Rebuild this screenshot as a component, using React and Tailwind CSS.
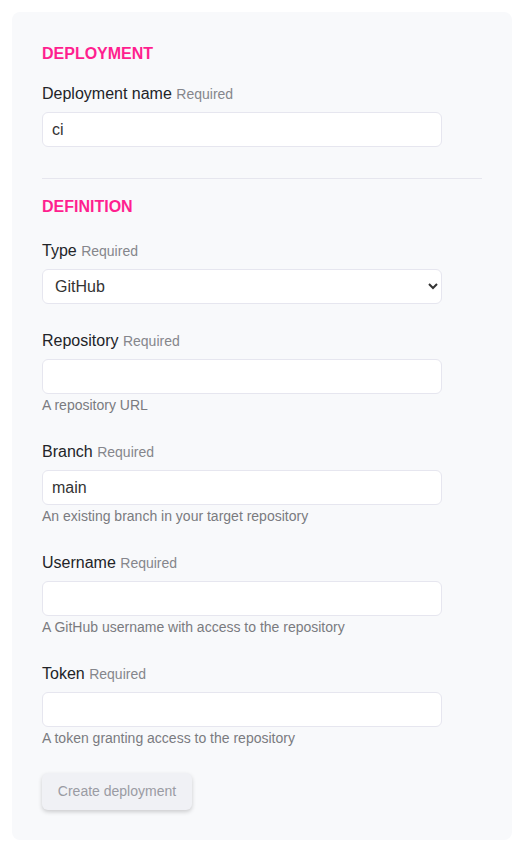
import React from "react";

const FONT = { fontFamily: '"Liberation Sans", Arial, sans-serif' };

function Label({ children }) {
  return (
    <div className="pt-[1px] text-[16px] leading-[24px] text-[#222428]">
      {children} <span className="text-[14px] text-[#85868c]">Required</span>
    </div>
  );
}

function Input({ value = "" }) {
  return (
    <input
      readOnly
      value={value}
      className="block w-[400px] h-[35px] mt-[6px] rounded-[6px] border border-[#e6e6ef] bg-white px-[9px] text-[16px] text-[#333] outline-none"
      style={FONT}
    />
  );
}

function Help({ children }) {
  return <div className="text-[14px] leading-[22px] text-[#7a7b80]">{children}</div>;
}

function Field({ label, value, help, gap = "mt-[23px]" }) {
  return (
    <div className={gap}>
      <Label>{label}</Label>
      <Input value={value} />
      <Help>{help}</Help>
    </div>
  );
}

export default function App() {
  return (
    <div className="bg-white p-[12px] w-[521px] min-h-[856px]" style={FONT}>
      <div className="w-[500px] bg-[#f8f9fb] rounded-[8px] px-[30px] pt-[31px] pb-[30px]">
        <h2 className="text-[16px] leading-[22px] font-bold text-[#ff1f8f]">DEPLOYMENT</h2>
        <div className="mt-[16px]">
          <Label>Deployment name</Label>
          <Input value="ci" />
        </div>
        <div className="mt-[31px] h-px bg-[#e6e6ee]" />
        <h2 className="mt-[17px] text-[16px] leading-[22px] font-bold text-[#ff1f8f]">DEFINITION</h2>
        <div className="mt-[20px]">
          <Label>Type</Label>
          <select
            defaultValue="GitHub"
            className="block w-[400px] h-[35px] mt-[6px] mb-[1px] rounded-[6px] border border-[#e6e6ef] bg-white pl-[8px] pr-[4px] text-[16px] text-[#333] outline-none"
            style={FONT}
          >
            <option>GitHub</option>
          </select>
        </div>
        <Field label="Repository" value="" help="A repository URL" gap="mt-[24px]" />
        <Field label="Branch" value="main" help="An existing branch in your target repository" />
        <Field label="Username" value="" help="A GitHub username with access to the repository" />
        <Field label="Token" value="" help="A token granting access to the repository" />
        <button
          className="mt-[24px] block w-[150px] h-[37px] rounded-[6px] bg-[#f0f1f5] text-[14px] text-[#9a9ba3] shadow-[0_2px_4px_rgba(0,0,0,0.18)]"
          style={FONT}
        >
          Create deployment
        </button>
      </div>
    </div>
  );
}
